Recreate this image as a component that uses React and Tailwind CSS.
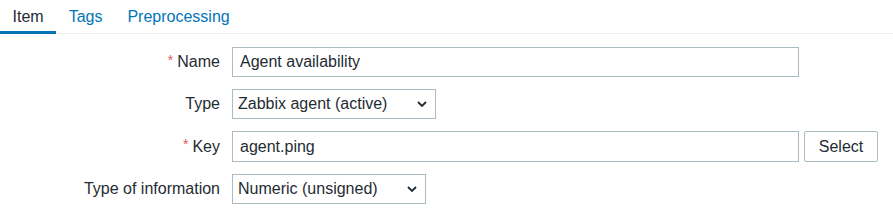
import React from "react";

function Chevron() {
  return (
    <svg width="10" height="6" viewBox="0 0 10 6" className="shrink-0">
      <path d="M1 1 L5 5 L9 1" fill="none" stroke="#1f2c33" strokeWidth="1.8" />
    </svg>
  );
}

function Label({ required, children }) {
  return (
    <div className="w-[220px] shrink-0 flex justify-end items-center gap-[4px] text-[16px] text-[#1f2c33]">
      {required && <span className="text-[#e45959] text-[14px] relative -top-[2px]">*</span>}
      <span>{children}</span>
    </div>
  );
}

export default function App() {
  return (
    <div
      className="w-[893px] h-[216px] bg-white text-[#1f2c33]"
      style={{ fontFamily: '"Liberation Sans", Arial, sans-serif' }}
    >
      <div className="flex h-[34px] border-b border-[#ebeef0] text-[16px]">
        <div className="px-[12.5px] pt-[5px] border-b-[3px] border-[#0275b8] h-[34px] text-[#1f2c33] -mb-px">Item</div>
        <div className="px-[12.5px] pt-[5px] text-[#0275b8]">Tags</div>
        <div className="px-[12.5px] pt-[5px] text-[#0275b8]">Preprocessing</div>
      </div>
      <div className="flex flex-col gap-[12px] pt-[13px]">
        <div className="flex items-center gap-[12px] h-[30px]">
          <Label required>Name</Label>
          <div className="w-[567px] h-[30px] border border-[#acbbc2] flex items-center px-[7px] text-[16px]">Agent availability</div>
        </div>
        <div className="flex items-center gap-[12px] h-[30px]">
          <Label>Type</Label>
          <div className="w-[204px] h-[30px] border border-[#acbbc2] flex items-center justify-between pl-[5px] pr-[8px] text-[16px]">
            <span>Zabbix agent (active)</span>
            <Chevron />
          </div>
        </div>
        <div className="flex items-center gap-[12px] h-[31px]">
          <Label required>Key</Label>
          <div className="flex items-center gap-[5px]">
            <div className="w-[567px] h-[31px] border border-[#acbbc2] flex items-center px-[7px] text-[16px]">agent.ping</div>
            <div className="w-[74px] h-[31px] border border-[#acbbc2] rounded-[2px] flex items-center justify-center text-[16px]">Select</div>
          </div>
        </div>
        <div className="flex items-center gap-[12px] h-[30px]">
          <Label>Type of information</Label>
          <div className="w-[194px] h-[30px] border border-[#acbbc2] flex items-center justify-between pl-[5px] pr-[8px] text-[16px]">
            <span>Numeric (unsigned)</span>
            <Chevron />
          </div>
        </div>
      </div>
    </div>
  );
}
